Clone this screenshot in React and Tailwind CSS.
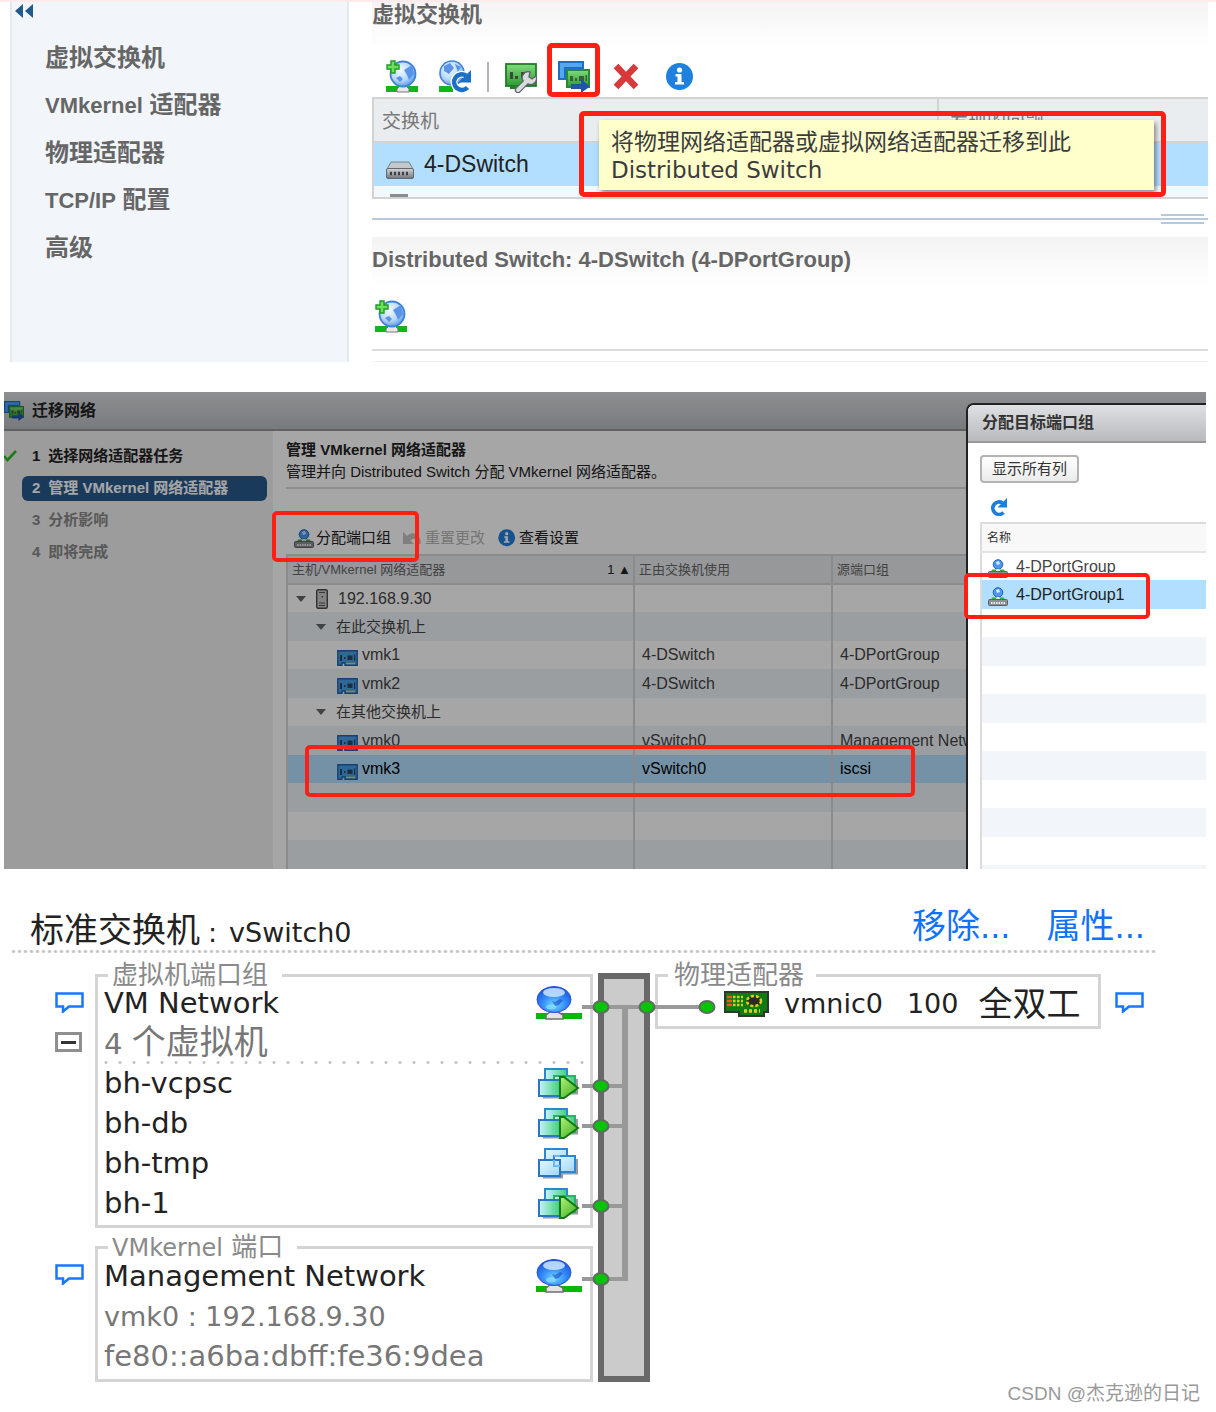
import clsx from 'clsx';

const steps = [
  { label: '选择网络适配器任务', state: 'done' },
  { label: '管理 VMkernel 网络适配器', state: 'active' },
  { label: '分析影响', state: 'todo' },
  { label: '即将完成', state: 'todo' },
];

const adapterRows = [
  { kind: 'host', name: '192.168.9.30' },
  { kind: 'group', name: '在此交换机上' },
  { kind: 'vmk', name: 'vmk1', sw: '4-DSwitch', pg: '4-DPortGroup' },
  { kind: 'vmk', name: 'vmk2', sw: '4-DSwitch', pg: '4-DPortGroup' },
  { kind: 'group', name: '在其他交换机上' },
  { kind: 'vmk', name: 'vmk0', sw: 'vSwitch0', pg: 'Management Network' },
  { kind: 'vmk', name: 'vmk3', sw: 'vSwitch0', pg: 'iscsi', selected: true },
  { kind: 'empty' },
  { kind: 'empty' },
  { kind: 'empty' },
];

const portGroups = ['4-DPortGroup', '4-DPortGroup1', '', '', '', '', '', '', '', '', '', ''];

const vms = [
  { name: 'bh-vcpsc', running: true },
  { name: 'bh-db', running: true },
  { name: 'bh-tmp', running: false },
  { name: 'bh-1', running: true },
];

/* Icons */

function Gradients() {
  return (
    <svg className="absolute h-0 w-0" aria-hidden="true">
      <defs>
        <radialGradient id="globe" cx="0.4" cy="0.35" r="0.7">
          <stop offset="0" stopColor="#f4faff" />
          <stop offset="0.6" stopColor="#b5d8f8" />
          <stop offset="1" stopColor="#4f93e0" />
        </radialGradient>
        <radialGradient id="orb" cx="0.5" cy="0.7" r="0.7">
          <stop offset="0" stopColor="#6fd8ff" />
          <stop offset="0.55" stopColor="#2f84f5" />
          <stop offset="1" stopColor="#1c4fd6" />
        </radialGradient>
        <linearGradient id="board" x1="0" y1="0" x2="0" y2="1">
          <stop offset="0" stopColor="#7fdc7a" />
          <stop offset="1" stopColor="#2f9a33" />
        </linearGradient>
        <linearGradient id="pane" x1="0" y1="0" x2="1" y2="1">
          <stop offset="0" stopColor="#e6f8ff" />
          <stop offset="1" stopColor="#9fd6fb" />
        </linearGradient>
        <linearGradient id="paneOn" x1="0" y1="0" x2="1" y2="0">
          <stop offset="0" stopColor="#c9f3fb" />
          <stop offset="1" stopColor="#3fd07c" />
        </linearGradient>
        <linearGradient id="play" x1="0" y1="0" x2="1" y2="1">
          <stop offset="0" stopColor="#b4f276" />
          <stop offset="1" stopColor="#35ad22" />
        </linearGradient>
        <linearGradient id="metal" x1="0" y1="0" x2="0" y2="1">
          <stop offset="0" stopColor="#d3d6d9" />
          <stop offset="1" stopColor="#72777c" />
        </linearGradient>
      </defs>
    </svg>
  );
}

function GlobeAddIcon() {
  return (
    <svg viewBox="0 0 32 33" className="h-[33px] w-8" aria-hidden="true">
      <rect x="0" y="26" width="32" height="6" fill="#16b31a" />
      <path d="M11 32v-3l3-3h6l3 3v3z" fill="#e8e8e8" stroke="#77797c" strokeWidth="1" />
      <circle cx="17" cy="14" r="12.500" fill="url(#globe)" stroke="#3f83d6" strokeWidth="1.800" />
      <path d="M18 10l8-5 2 9-5 6-2-5zM10 18l4-2 3 3-3 3z" fill="#5b93e8" />
      <path d="M5 1h4v4h4v4H9v4H5V9H1V5h4z" fill="#6fe05c" stroke="#1f9a26" strokeWidth="1.400" />
    </svg>
  );
}

function GlobeRefreshIcon() {
  return (
    <svg viewBox="0 0 32 33" className="h-[33px] w-8" aria-hidden="true">
      <circle cx="13" cy="13" r="12" fill="url(#globe)" stroke="#3f83d6" strokeWidth="1.600" />
      <path d="M5 6l6-3 4 5-5 6-5-3zM16 4l6 3-3 5z" fill="#5b93e8" />
      <rect x="0" y="26" width="14" height="6" fill="#16b31a" />
      <path d="M28.500 27.500A7.800 7.800 0 1 1 27 15.500" fill="none" stroke="#fff" strokeWidth="7" />
      <path d="M28.500 27.500A7.800 7.800 0 1 1 27 15.500" fill="none" stroke="#1b6fc4" strokeWidth="4.500" />
      <path d="M32 10v12.500H19.500z" fill="#1b6fc4" />
    </svg>
  );
}

function NicWrenchIcon() {
  return (
    <svg viewBox="0 0 32 32" className="h-8 w-8" aria-hidden="true">
      <rect x="1" y="3" width="30" height="22" fill="url(#board)" stroke="#1f7d26" strokeWidth="1.800" />
      <path d="M5 11h3v7H5zM10 15h3v3h-3zM16 11h6v6h-6z" fill="#3b4a3b" />
      <path d="M5 25h6v3H5z" fill="#1f7d26" />
      <path d="M13 29l9-9" stroke="#5e6368" strokeWidth="6.500" strokeLinecap="round" />
      <path d="M19 21a6 6 0 0 1 6-10l-1 5 3 2 4-3a6 6 0 0 1-8 8z" fill="#d9dcdf" stroke="#5e6368" strokeWidth="1.400" />
      <path d="M13 29l9-9" stroke="#d9dcdf" strokeWidth="4" strokeLinecap="round" />
    </svg>
  );
}

function MigrateIcon({ className = 'h-8 w-8' }) {
  return (
    <svg viewBox="0 0 32 32" className={className} aria-hidden="true">
      <path d="M1 18V1h24v6H7v11z" fill="#55a6ee" stroke="#1d6fc2" strokeWidth="2" />
      <rect x="9" y="9" width="22" height="17" fill="url(#board)" stroke="#2a8a31" strokeWidth="2" />
      <path d="M12 15h3v5h-3zM17 17h2v3h-2zM21 15h5v5h-5zM27.500 14h1.500v6h-1.500z" fill="#35603a" />
      <path d="M13 23h10v-5l9 7.500-9 6.500v-4H13z" fill="#1f55ad" />
    </svg>
  );
}

function DeleteIcon() {
  return (
    <svg viewBox="0 0 32 32" className="h-8 w-8" aria-hidden="true">
      <path d="M5 5l20 21M25 5L5 26" stroke="#d63a3a" strokeWidth="6.500" />
    </svg>
  );
}

function InfoIcon({ className = 'h-8 w-8' }) {
  return (
    <svg viewBox="0 0 32 32" className={className} aria-hidden="true">
      <circle cx="15.500" cy="15.500" r="13.500" fill="#1f80de" />
      <circle cx="15.500" cy="9" r="2.600" fill="#fff" />
      <path d="M11.500 13h6v8H20v2.500h-9V21h2.500v-5.500h-2z" fill="#fff" />
    </svg>
  );
}

function SwitchIcon() {
  return (
    <svg viewBox="0 0 28 18" className="h-[18px] w-7" aria-hidden="true">
      <path d="M5 1h18l4 7H1z" fill="#c3c8cc" stroke="#7b8187" strokeWidth="1" />
      <rect x="0.500" y="7.500" width="27" height="10" rx="1.500" fill="url(#metal)" stroke="#63686d" />
      <path d="M4 12.500h20" stroke="#3c4044" strokeWidth="3.500" strokeDasharray="2 2" />
    </svg>
  );
}

function PortGroupIcon() {
  return (
    <svg viewBox="0 0 20 19" className="h-[19px] w-5 shrink-0" aria-hidden="true">
      <circle cx="10" cy="5.500" r="4.800" fill="#4d97ee" stroke="#1d63bd" />
      <path d="M8 3l3-1 1 3-3 1z" fill="#d6ecff" />
      <path d="M4 10.500h4v2.500H3zM12 10.500h4l1 2.500h-5z" fill="#2fae3a" />
      <path d="M8.500 10h3v3h-3z" fill="#e2e4e6" />
      <rect x="0.500" y="12.500" width="19" height="6" rx="1" fill="#8b9095" stroke="#5d6267" />
      <path d="M3 16h14" stroke="#e8eaec" strokeWidth="2" strokeDasharray="1.500 1" />
    </svg>
  );
}

function UndoIcon() {
  return (
    <svg viewBox="0 0 18 14" className="h-3.5 w-[18px]" aria-hidden="true">
      <path d="M0 1v12h11L7.500 9.500C10 6.500 14 7 14 13h3.500C19 3 9-1 4 5z" fill="#c4c4c4" />
    </svg>
  );
}

function HostIcon() {
  return (
    <svg viewBox="0 0 12 20" className="h-5 w-3" aria-hidden="true">
      <rect x="0.700" y="0.700" width="10.600" height="18.600" rx="1.500" fill="#c9c9c9" stroke="#4a4a4a" strokeWidth="1.400" />
      <path d="M3 3.500h6M3 14h6M3 16.500h6" stroke="#555" strokeWidth="1.200" />
      <path d="M5.500 7h1.500v1.500H5.500z" fill="#555" />
    </svg>
  );
}

function VmkIcon() {
  return (
    <svg viewBox="0 0 21 16" className="mt-[5px] h-4 w-[21px]" aria-hidden="true">
      <path d="M0.800 0.800h19.400v14.400H8V13H5v2.200H0.800z" fill="#4a9fe6" stroke="#1f65ab" strokeWidth="1.400" />
      <path d="M3 5h2v6H3zM7 7h1.500v2H7zM10.500 5.500h5v4.500h-5zM17 4.500h1.200V11H17z" fill="#274766" />
      <path d="M9 13.500h9" stroke="#c9d68a" strokeWidth="1.500" />
    </svg>
  );
}

function CheckIcon() {
  return (
    <svg viewBox="0 0 13 12" className="h-3 w-[13px]" aria-hidden="true">
      <path d="M0 6l3.500 4L12 1" fill="none" stroke="#2fbf25" strokeWidth="2.600" />
    </svg>
  );
}

function RefreshIcon() {
  return (
    <svg viewBox="0 0 18 18" className="h-[18px] w-[18px]" aria-hidden="true">
      <path d="M14.500 14.500A6.200 6.200 0 1 1 13.500 5" fill="none" stroke="#1b7fe0" strokeWidth="3.800" />
      <path d="M18 0v9.500H8.500z" fill="#1b7fe0" />
    </svg>
  );
}

function BubbleIcon() {
  return (
    <svg viewBox="0 0 29 21" className="h-[21px] w-[29px]" aria-hidden="true">
      <path d="M1.500 1.500h26v13H14l-6 5v-5H1.500z" fill="#fff" stroke="#1877ff" strokeWidth="2.500" />
    </svg>
  );
}

function NetworkIcon() {
  return (
    <svg viewBox="0 0 46 34" className="h-[34px] w-[46px]" aria-hidden="true">
      <rect y="27" width="46" height="6" fill="#05b905" />
      <path d="M10 33v-4l4-3h8l5 3v4z" fill="#e4e4e4" stroke="#6e6e6e" strokeWidth="1.500" />
      <ellipse cx="18" cy="13.500" rx="17" ry="13" fill="url(#orb)" stroke="#2c50d8" strokeWidth="1" />
      <ellipse cx="18" cy="6.500" rx="11" ry="4.500" fill="#c2e0ff" opacity="0.900" />
      <path d="M16 15l3 1 5-3 3 1-4 5-4 1z" fill="#1747c4" opacity="0.600" />
      <ellipse cx="15" cy="21" rx="5" ry="2.500" fill="#8be3ff" opacity="0.700" />
    </svg>
  );
}

function VmIcon({ running }) {
  return (
    <svg viewBox="0 0 42 32" className="h-8 w-[42px]" aria-hidden="true">
      <path d="M5 30.500h19v-4h15V12" fill="none" stroke="#9b9b9b" strokeWidth="2" />
      <rect x="7" y="2" width="22" height="16" fill={running ? 'url(#paneOn)' : 'url(#pane)'} stroke="#2b86d4" strokeWidth="2" />
      <rect x="16" y="9" width="21" height="16" fill={running ? 'url(#paneOn)' : 'url(#pane)'} stroke={running ? '#2fae6a' : '#2b86d4'} strokeWidth="2" />
      <rect x="1" y="13" width="21" height="16" fill={running ? 'url(#paneOn)' : 'url(#pane)'} stroke="#2b74c8" strokeWidth="2" />
      {!running && <path d="M16 13v6h6M16 9h6" fill="none" stroke="#6fb9ec" strokeWidth="2" />}
      {running && <path d="M22 10h4l14 11-14 10h-4z" fill="url(#play)" stroke="#147a16" strokeWidth="2" />}
    </svg>
  );
}

function NicBoardIcon() {
  return (
    <svg viewBox="0 0 46 27" className="h-[27px] w-[46px]" aria-hidden="true">
      <path d="M1 1h43v20h-4v4H15v-4H1z" fill="#0d7d12" stroke="#2c3a2c" strokeWidth="2" />
      <path d="M3 6h5M3 10h5M3 14h5" stroke="#f0561d" strokeWidth="2.500" />
      <path d="M9 6h10M9 10h10M9 14h10" stroke="#d8d21c" strokeWidth="2.500" strokeDasharray="2.500 1.500" />
      <ellipse cx="30" cy="10" rx="7" ry="5" fill="#2b2b22" stroke="#e0cf1e" strokeWidth="2.500" strokeDasharray="3 2" />
      <path d="M20 20h16" stroke="#e0cf1e" strokeWidth="3.500" strokeDasharray="3 2" />
    </svg>
  );
}

function Twisty() {
  return (
    <svg viewBox="0 0 10 6" className="h-1.5 w-2.5" aria-hidden="true">
      <path d="M0 0h10L5 6z" fill="#666" />
    </svg>
  );
}

function Highlight({ className }) {
  return <span aria-hidden="true" className={clsx('pointer-events-none absolute rounded-[5px] border-[#fe2015]', className)} />;
}

/* Virtual switches */

function SwitchesPanel() {
  return (
    <section className="ml-2.5 mr-2 flex text-[#666]">
      <aside className="w-[339px] shrink-0 border-x-2 border-[#e3e9f1] bg-[#f2f6fb]">
        <button aria-label="折叠" className="ml-[3px] mt-0.5 block">
          <svg viewBox="0 0 18 14" className="h-3.5 w-[18px]" aria-hidden="true">
            <path d="M8 0v14L0 7zM18 0v14l-8-7z" fill="#235a8c" />
          </svg>
        </button>
        <nav className="mt-4 flex flex-col pl-[33px] text-2xl leading-[47px] font-bold">
          <a href="#switches">虚拟交换机</a>
          <a href="#vmkernel"><span className="text-[22px]">VMkernel</span> 适配器</a>
          <a href="#physical">物理适配器</a>
          <a href="#tcpip"><span className="text-[22px]">TCP/IP</span> 配置</a>
          <a href="#advanced">高级</a>
        </nav>
      </aside>

      <div className="ml-[23px] min-w-0 flex-1">
        <h2 className="h-[46px] bg-gradient-to-b from-[#f4f4f4] to-white text-[22px] leading-[26px] font-bold">虚拟交换机</h2>
        <div className="flex h-[49px] items-center pt-2 pl-3.5">
          <div className="flex gap-[21px]">
            <button aria-label="添加网络"><GlobeAddIcon /></button>
            <button aria-label="刷新网络"><GlobeRefreshIcon /></button>
          </div>
          <span className="mx-4 h-[30px] w-0.5 bg-[#b5b5b5]" />
          <div className="flex gap-[21px]">
            <button aria-label="管理物理适配器"><NicWrenchIcon /></button>
            <button aria-label="迁移网络" className="relative">
              <MigrateIcon />
              <Highlight className="-top-[18px] -left-[11px] h-[54px] w-[53px] border-5" />
            </button>
            <button aria-label="移除"><DeleteIcon /></button>
            <button aria-label="信息"><InfoIcon /></button>
          </div>
        </div>

        <div className="relative">
          <table className="w-full table-fixed border-y-2 border-l-2 border-[#d3d3d3] text-left">
            <colgroup>
              <col className="w-[565px]" />
              <col />
            </colgroup>
            <thead>
              <tr className="h-11 border-b-2 border-[#d3d3d3] bg-[#eaedf0] text-[19px] leading-6 text-[#777]">
                <th className="pt-1 pl-2 font-normal">交换机</th>
                <th className="border-l-2 border-[#d3d3d3] pt-1 pl-2.5 font-normal">发现的问题</th>
              </tr>
            </thead>
            <tbody>
              <tr className="h-11 bg-[#b2dfff] text-[23px] text-[#222]">
                <td className="pl-3">
                  <div className="flex items-center gap-2.5">
                    <span className="pt-2.5"><SwitchIcon /></span>4-DSwitch
                  </div>
                </td>
                <td />
              </tr>
              <tr className="h-3 bg-[#f3f8fd]">
                <td className="pl-4 align-bottom"><div className="h-[3px] w-[18px] bg-[#8a8d90]" /></td>
                <td />
              </tr>
            </tbody>
          </table>
          <div role="tooltip" className="absolute top-[23px] right-[54px] left-[227px] bg-[#ffffcc] px-3 pt-2 pb-1.5 text-[23px] leading-7 text-[#3c3c3c] shadow-[2px_3px_5px_rgba(0,0,0,0.45)]">
            将物理网络适配器或虚拟网络适配器迁移到此
            <span className="block font-['DejaVu_Sans',sans-serif]">Distributed Switch</span>
          </div>
          <Highlight className="top-3.5 right-[42px] bottom-0.5 left-[207px] border-5" />
        </div>

        <div className="mt-[13px] flex h-[14px] items-center">
          <span className="h-0.5 flex-1 bg-[#b9c9dc]" />
          <span className="flex w-[43px] flex-col gap-0.5">
            <span className="h-0.5 bg-[#b9c9dc]" />
            <span className="h-0.5 bg-[#b9c9dc]" />
            <span className="h-0.5 bg-[#b9c9dc]" />
          </span>
          <span className="h-0.5 w-1 bg-[#b9c9dc]" />
        </div>

        <h3 className="mt-[11px] h-[50px] bg-gradient-to-b from-[#f3f3f3] to-white text-[22px] leading-[45px] font-bold">
          Distributed Switch: 4-DSwitch (4-DPortGroup)
        </h3>
        <button aria-label="添加网络" className="mt-[13px] ml-[3px] block"><GlobeAddIcon /></button>
        <div className="mt-4 h-[13px] border-t-2 border-b border-t-[#dcdcdc] border-b-[#f0f0f0]" />
      </div>
    </section>
  );
}

/* Migrate networking wizard */

function AdapterName({ row }) {
  if (row.kind === 'host') {
    return (
      <div className="flex items-center gap-2.5 pl-2">
        <Twisty />
        <HostIcon />
        {row.name}
      </div>
    );
  }
  if (row.kind === 'group') {
    return <div className="flex items-center gap-2.5 pl-7 text-[15px]"><Twisty />{row.name}</div>;
  }
  if (row.kind === 'vmk') {
    return <div className="flex items-center gap-1 pl-[49px]"><VmkIcon />{row.name}</div>;
  }
  return null;
}

function Wizard() {
  return (
    <div className="flex flex-col text-[#222]">
      <h2 className="flex h-[39px] items-center gap-2 border-b-2 border-[#959595] bg-gradient-to-b from-[#dadce0] to-[#babcc0] text-base font-bold">
        <MigrateIcon className="h-5 w-5" />迁移网络
      </h2>
      <div className="flex">
        <ol className="w-[269px] shrink-0 bg-[#f0f0f0] pt-[9px] text-[15px] font-bold">
          {steps.map((step, i) => (
            <li key={step.label} className="flex h-8 items-center">
              <span className="w-[18px]">{step.state === 'done' && <CheckIcon />}</span>
              <span
                className={clsx(
                  'mr-1.5 flex h-[25px] flex-1 items-center gap-2 rounded-md pl-2.5',
                  step.state === 'active' && 'bg-[#29598e] text-white',
                  step.state === 'todo' && 'text-[#888]',
                )}
              >
                <span>{i + 1}</span>
                <span>{step.label}</span>
              </span>
            </li>
          ))}
        </ol>

        <div className="min-w-0 flex-1 bg-white pt-2 pl-[13px]">
          <h3 className="text-[15px] leading-[22px] font-bold">管理 VMkernel 网络适配器</h3>
          <p className="border-b-2 border-[#d9d9d9] pb-1 text-[15px] leading-[22px]">
            管理并向 Distributed Switch 分配 VMkernel 网络适配器。
          </p>
          <div className="mt-[33px] flex h-8 items-center pl-2 text-[15px]">
            <button className="flex items-center gap-0.5"><PortGroupIcon />分配端口组</button>
            <button className="ml-3 flex items-center gap-1 text-[#b5b5b5]" disabled><UndoIcon />重置更改</button>
            <button className="ml-3 flex items-center gap-0.5"><InfoIcon className="h-5 w-5" />查看设置</button>
          </div>
          <table className="w-full table-fixed border-l-2 border-[#d6d6d6] text-left">
            <colgroup>
              <col className="w-[347px]" />
              <col className="w-[198px]" />
              <col />
            </colgroup>
            <thead>
              <tr className="h-[29px] border-y-2 border-[#d6d6d6] bg-[#e6eaed] text-[13px] text-[#666]">
                <th className="pl-1 font-normal">
                  <div className="flex justify-between pr-0.5">
                    <span>主机/VMkernel 网络适配器</span>
                    <span className="text-[#222]">1 ▲</span>
                  </div>
                </th>
                <th className="border-l-2 border-[#d6d6d6] pl-1 font-normal">正由交换机使用</th>
                <th className="border-l-2 border-[#d6d6d6] pl-1 font-normal">源端口组</th>
              </tr>
            </thead>
            <tbody>
              {adapterRows.map((row, i) => (
                <tr
                  key={i}
                  className={clsx(
                    'h-[29px] text-base leading-5 odd:h-7',
                    row.selected ? 'bg-[#b2dfff] text-black' : 'text-[#444] even:bg-[#eef3f8]',
                  )}
                >
                  <td><AdapterName row={row} /></td>
                  <td className="border-l-2 border-[#d6d6d6] pl-[7px]">{row.sw}</td>
                  <td className="border-l-2 border-[#d6d6d6] pl-[7px]">{row.pg}</td>
                </tr>
              ))}
            </tbody>
          </table>
        </div>
      </div>
    </div>
  );
}

function AssignDialog() {
  return (
    <div role="dialog" aria-label="分配目标端口组" className="absolute top-[11px] right-0 bottom-0 w-[240px] overflow-hidden rounded-tl-lg border-t-2 border-l-2 border-[#222] bg-white text-[#333]">
      <h3 className="h-[38px] border-b-2 border-[#999] bg-gradient-to-b from-[#dfe0e3] to-[#b9babd] pl-3.5 text-base leading-9 font-bold">分配目标端口组</h3>
      <div className="pt-3 pl-3">
        <button className="block h-7 rounded border-2 border-[#b3b3b3] bg-gradient-to-b from-white to-[#ebebeb] px-2.5 text-[15px] leading-6">显示所有列</button>
        <button aria-label="刷新" className="mt-[15px] ml-[9px] block"><RefreshIcon /></button>
        <table className="mt-1.5 w-full border-t-2 border-l-2 border-[#dcdcdc] text-left">
          <thead>
            <tr className="h-[29px] border-b-2 border-[#e4e4e4] bg-[#f8f8f8] text-xs">
              <th className="pl-[5px] font-normal">名称</th>
            </tr>
          </thead>
          <tbody>
            {portGroups.map((name, i) => (
              <tr
                key={i}
                className={clsx(
                  'h-[29px] text-base leading-5 odd:h-7',
                  i === 1 ? 'bg-[#b2dfff] text-[#222]' : 'text-[#444] even:bg-[#f2f6fb]',
                )}
              >
                <td className="pl-1.5">
                  {name && <div className="flex items-center gap-2"><span className="pt-1"><PortGroupIcon /></span>{name}</div>}
                </td>
              </tr>
            ))}
          </tbody>
        </table>
      </div>
    </div>
  );
}

function MigratePanel() {
  return (
    <section className="relative mt-[30px] mr-2.5 ml-1">
      <div className="relative overflow-hidden">
        <Wizard />
        <div className="absolute inset-0 bg-black/35" />
        <AssignDialog />
      </div>
      <Highlight className="top-[119px] left-[268px] h-[51px] w-[147px] border-4" />
      <Highlight className="top-[353px] left-[301px] h-[52px] w-[610px] border-4" />
      <Highlight className="top-[181px] right-14 h-[46px] w-[186px] border-4" />
    </section>
  );
}

/* Standard switch diagram */

function PortGroupBox({ legend, gutter, children }) {
  return (
    <div className="flex">
      <div className="w-[95px] shrink-0 pt-4 pl-[55px]">{gutter}</div>
      <fieldset className="min-w-0 flex-1 border-[3px] border-[#d4d4d4]">
        <legend className="ml-2.5 pr-3.5 pl-1 text-[26px] leading-[18px] text-[#8a8a8a]">{legend}</legend>
        {children}
      </fieldset>
    </div>
  );
}

function PortRow({ children, icon, muted }) {
  return (
    <div className={clsx('flex h-10 items-center justify-between pb-0.5 pl-1.5 text-[29px] leading-[38px]', muted ? 'text-[#777]' : 'text-[#222]')}>
      <span className="whitespace-nowrap">{children}</span>
      {icon}
    </div>
  );
}

function SwitchTrunk() {
  return (
    <div className="relative mx-[5px] mt-[7px] border-[6px] border-[#696969] bg-[#cbcbcb]">
      <svg viewBox="0 0 134 320" className="absolute -top-1.5 -left-[22px] h-[320px] w-[134px]" aria-hidden="true">
        <path d="M0 34h124M0 113h42M0 153h42M0 233h42M0 306h42" stroke="#999" strokeWidth="4" />
        <path d="M43 34v274" stroke="#999" strokeWidth="6" />
        {[[19, 34], [65, 34], [125, 34], [19, 113], [19, 153], [19, 233], [19, 306]].map(([cx, cy]) => (
          <ellipse key={`${cx}-${cy}`} cx={cx} cy={cy} rx="7.500" ry="6" fill="#05c405" stroke="#5f6b5f" strokeWidth="2" />
        ))}
      </svg>
    </div>
  );
}

function StandardSwitch() {
  return (
    <section className="pt-[39px] font-['DejaVu_Sans','Noto_Sans_CJK_SC',sans-serif]">
      <header className="mr-[59px] ml-2.5 flex h-[45px] items-start bg-[radial-gradient(circle,#bdbdbd_1px,transparent_2px)] bg-[length:6px_3px] bg-bottom bg-repeat-x pl-5">
        <h2 className="flex items-baseline gap-2 text-[34px] leading-[44px] text-[#222]">
          标准交换机<span className="text-[27px]">:</span><span className="ml-1 text-[27px]">vSwitch0</span>
        </h2>
        <div className="mr-3 ml-auto flex gap-9 text-[34px] leading-9 text-[#1072ff]">
          <a href="#remove">移除<span className="text-[32px]">...</span></a>
          <a href="#properties">属性<span className="text-[32px]">...</span></a>
        </div>
      </header>

      <div className="mt-[13px] grid grid-cols-[593fr_62px_446fr_115px]">
        <div className="flex flex-col gap-2.5">
          <PortGroupBox
            legend="虚拟机端口组"
            gutter={
              <>
                <div className="flex h-10 items-center"><BubbleIcon /></div>
                <div className="flex h-10 items-center">
                  <button aria-label="折叠虚拟机" className="flex h-5 w-[27px] items-center justify-center border-[3px] border-[#8f8f8f]">
                    <span className="h-[3px] w-[15px] bg-[#333]" />
                  </button>
                </div>
              </>
            }
          >
            <PortRow icon={<span className="mr-2"><NetworkIcon /></span>}>VM Network</PortRow>
            <div className="bg-[radial-gradient(circle,#c4c4c4_1px,transparent_2px)] bg-[length:14px_3px] bg-bottom bg-repeat-x">
              <PortRow muted>4 <span className="text-[34px]">个虚拟机</span></PortRow>
            </div>
            {vms.map(vm => (
              <PortRow key={vm.name} icon={<span className="mr-2.5"><VmIcon running={vm.running} /></span>}>{vm.name}</PortRow>
            ))}
            <div className="h-px" />
          </PortGroupBox>

          <PortGroupBox
            legend={<><span className="text-2xl leading-[18px]">VMkernel</span> 端口</>}
            gutter={<div className="flex h-10 items-center"><BubbleIcon /></div>}
          >
            <PortRow icon={<span className="mr-2"><NetworkIcon /></span>}>Management Network</PortRow>
            <PortRow muted><span className="text-[27px]">vmk0 : 192.168.9.30</span></PortRow>
            <PortRow muted>fe80::a6ba:dbff:fe36:9dea</PortRow>
            <div className="h-0.5" />
          </PortGroupBox>
        </div>

        <SwitchTrunk />

        <fieldset className="min-w-0 self-start border-[3px] border-[#d4d4d4]">
          <legend className="ml-2.5 pr-3 pl-1.5 text-[26px] leading-[18px] text-[#8a8a8a]">物理适配器</legend>
          <div className="flex h-[42px] items-center pb-0.5 pl-[66px] text-[27px] leading-10 whitespace-nowrap text-[#222]">
            <NicBoardIcon />
            <span className="ml-3.5">vmnic0</span>
            <span className="ml-6">100</span>
            <span className="ml-5 text-[34px]">全双工</span>
          </div>
        </fieldset>
        <div className="mt-4 flex h-10 items-center pl-3.5"><BubbleIcon /></div>
      </div>
    </section>
  );
}

export default function App() {
  return (
    <main className="border-t-2 border-[#fdeaea] bg-white font-['Liberation_Sans','Noto_Sans_CJK_SC',sans-serif]">
      <Gradients />
      <SwitchesPanel />
      <MigratePanel />
      <StandardSwitch />
      <footer className="pr-4 text-right text-[19px] leading-6 text-[#999]">CSDN @杰克逊的日记</footer>
    </main>
  );
}
